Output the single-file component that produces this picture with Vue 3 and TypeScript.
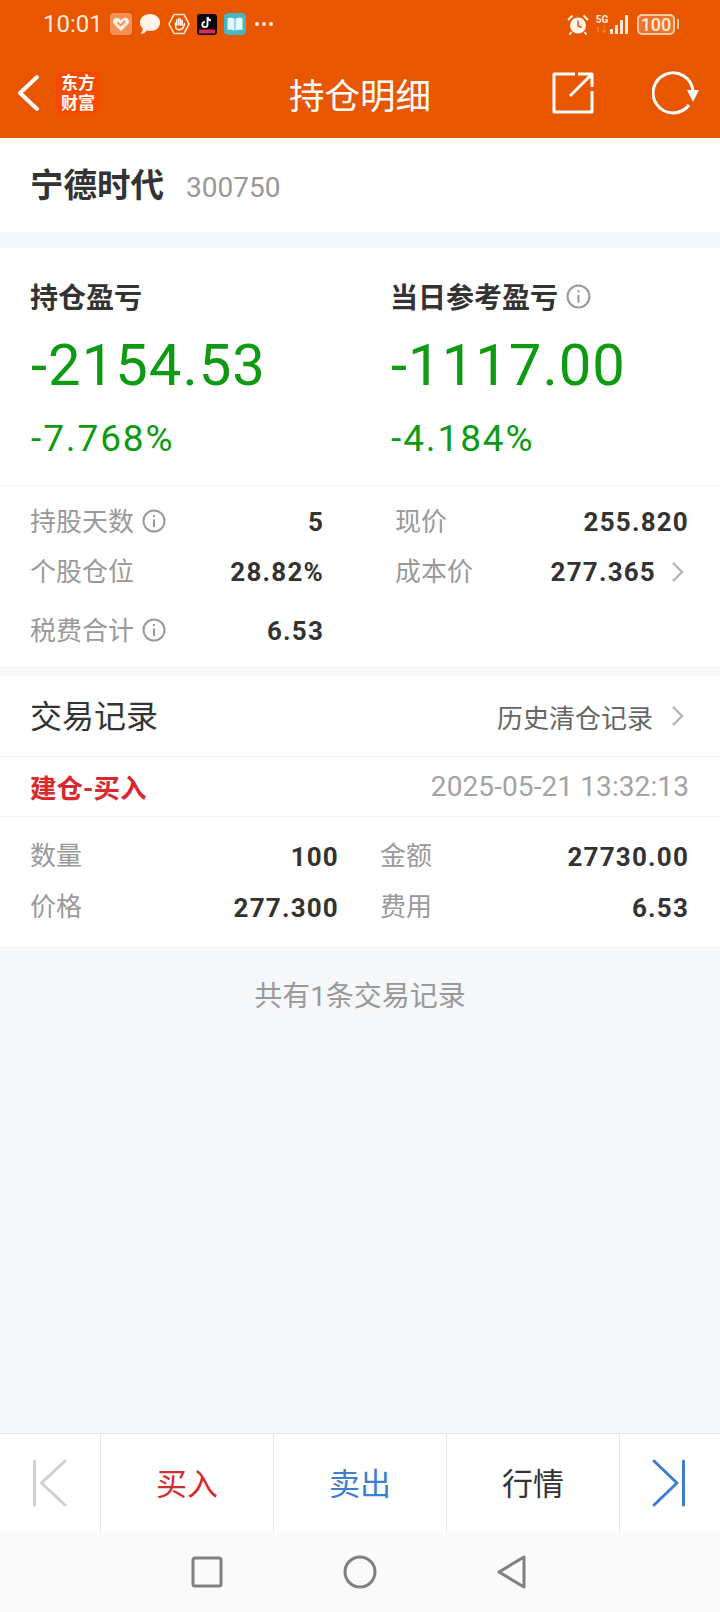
<template>
  <div class="page">
    <header class="top">
      <div class="status-bar">
        <span class="time">10:01</span>
        <div class="notify-icons">
          <svg class="ic-health" width="22" height="22" viewBox="0 0 22 22">
            <rect width="22" height="22" rx="4" fill="#f68f55" />
            <path d="M11 18 L3.5 10.5 C1.8 7 5 3.6 8 5 C9.5 5.7 10.4 6.5 11 7.4 C11.6 6.5 12.5 5.7 14 5 C17 3.6 20.2 7 18.5 10.5 Z" fill="#fff1e4" />
            <path d="M7.5 9.5 L10.5 12.5 L15 8" fill="none" stroke="#f68f55" stroke-width="1.8" />
          </svg>
          <svg class="ic-chat" width="22" height="22" viewBox="0 0 22 22">
            <path d="M11 1 C17 1 21 4.600 21 9.500 C21 14.500 17 18 11 18 C9.800 18 8.700 17.800 7.800 17.500 C6.500 19.500 4.500 20.700 1.500 21 C3 19.300 3.700 17.500 3.800 15.500 C2 14 1 12 1 9.500 C1 4.600 5 1 11 1 Z" fill="#fff3ea" />
          </svg>
          <svg class="ic-hand" width="22" height="22" viewBox="0 0 22 22">
            <path d="M6 1.500 H16 L21 11 L16 20.500 H6 L1 11 Z" fill="none" stroke="#ffe6d5" stroke-width="1.600" />
            <path d="M7.500 10 V12.500 C7.500 15 9 16.800 11.300 16.800 C13.500 16.800 15 15.500 15.700 13.500 L16.500 10.800 M8.800 12 V6.800 M10.700 12 V5.500 M12.500 12 V6 M14.200 12.500 V7.500" fill="none" stroke="#fff3ea" stroke-width="1.500" stroke-linecap="round" />
          </svg>
          <svg class="ic-tiktok" width="20" height="21" viewBox="0 0 20 21">
            <rect width="20" height="21" rx="3" fill="#0a0712" />
            <rect x="2" y="15.500" width="16" height="4" fill="#d92a55" />
            <path d="M10.500 3 V10.500 A2.600 2.600 0 1 1 7.900 7.900 M10.500 3 C10.800 5 12 6.200 14 6.400" fill="none" stroke="#fff" stroke-width="1.800" />
          </svg>
          <svg class="ic-book" width="22" height="22" viewBox="0 0 22 22">
            <rect width="22" height="22" rx="4" fill="#43b7c8" />
            <path d="M11 6 C9 4.600 6.500 4.500 3.500 5 V17 C6.500 16.500 9 16.600 11 18 C13 16.600 15.500 16.500 18.500 17 V5 C15.500 4.500 13 4.600 11 6 Z" fill="#e6f8fb" />
            <path d="M11 6 V18" stroke="#43b7c8" stroke-width="1" />
          </svg>
          <span class="dots"><i></i><i></i><i></i></span>
        </div>
        <div class="system-icons">
          <svg width="22" height="21" viewBox="0 0 22 21">
            <circle cx="11" cy="11.500" r="8" fill="#fff3ea" />
            <path d="M11 6.500 V12 L14.500 13.500" fill="none" stroke="#e85600" stroke-width="1.500" />
            <path d="M1 6 L5.500 1.500 M21 6 L16.500 1.500 M4.500 18 L2.500 20.500 M17.500 18 L19.500 20.500" stroke="#fff3ea" stroke-width="2" />
          </svg>
          <div class="net">
            <span class="net-g">5G</span>
            <span class="net-arrows">1↓</span>
          </div>
          <div class="signal">
            <i v-for="h in signalBars" :key="h" :style="{ height: h + 'px' }"></i>
          </div>
          <div class="battery">
            <span class="battery-body">100</span>
            <i class="battery-tip"></i>
          </div>
        </div>
      </div>
      <div class="nav-bar">
        <div class="nav-left">
          <svg width="24" height="38" viewBox="0 0 24 38">
            <path d="M21 3 L4 19 L21 35" fill="none" stroke="#fff" stroke-width="4" stroke-linecap="round" stroke-linejoin="round" />
          </svg>
          <div class="logo">东方<br />财富</div>
        </div>
        <h1 class="nav-title">持仓明细</h1>
        <div class="nav-right">
          <svg width="44" height="44" viewBox="0 0 44 44">
            <path d="M24 3 H3 V41 H41 V20" fill="none" stroke="#fff" stroke-width="3" stroke-linejoin="round" />
            <path d="M19 25 L41 3 M27 3 H41 V16" fill="none" stroke="#fff" stroke-width="3" stroke-linejoin="round" />
          </svg>
          <svg width="48" height="46" viewBox="0 0 48 46">
            <path d="M41 21 A20 20 0 1 0 37 35" fill="none" stroke="#fff" stroke-width="3" />
            <path d="M35 20 H47 L41 32 Z" fill="#fff" />
          </svg>
        </div>
      </div>
    </header>

    <main class="main">
      <section class="stock">
        <span class="stock-name">宁德时代</span>
        <span class="stock-code">300750</span>
      </section>

      <section class="profit">
        <div class="profit-cols">
          <div v-for="p in profits" :key="p.label" class="profit-col">
            <div class="profit-label">
              {{ p.label }}
              <svg v-if="p.info" class="info info-lg" viewBox="0 0 24 24">
                <circle cx="12" cy="12" r="10.500" />
                <path d="M12 10.500 V18 M12 6 V8" />
              </svg>
            </div>
            <div class="profit-value">{{ p.value }}</div>
            <div class="profit-rate">{{ p.rate }}</div>
          </div>
        </div>
        <div class="details">
          <div v-for="d in details" :key="d.label" class="detail" :class="{ 'detail-tall': d.tall }">
            <span class="k">
              {{ d.label }}
              <svg v-if="d.info" class="info info-sm" viewBox="0 0 24 24">
                <circle cx="12" cy="12" r="10.500" />
                <path d="M12 10.500 V18 M12 6 V8" />
              </svg>
            </span>
            <span class="v">
              {{ d.value }}
              <svg v-if="d.more" class="chev" viewBox="0 0 14 24">
                <path d="M2 2 L12 12 L2 22" />
              </svg>
            </span>
          </div>
        </div>
      </section>

      <section class="records">
        <div class="records-head">
          <span class="records-title">交易记录</span>
          <span class="records-link">
            历史清仓记录
            <svg class="chev" viewBox="0 0 14 24">
              <path d="M2 2 L12 12 L2 22" />
            </svg>
          </span>
        </div>
        <div class="trade-head">
          <span class="trade-type">建仓-买入</span>
          <span class="trade-time">2025-05-21 13:32:13</span>
        </div>
        <div class="trade-body">
          <div v-for="t in trade" :key="t.label" class="trade-item">
            <span class="k">{{ t.label }}</span>
            <span class="v">{{ t.value }}</span>
          </div>
        </div>
      </section>

      <p class="records-count">共有1条交易记录</p>
    </main>

    <footer class="toolbar">
      <div class="tool tool-arrow">
        <svg width="40" height="50" viewBox="0 0 40 50">
          <path d="M3.500 3 V47 M34 3 L10.500 25 L34 47" fill="none" stroke="#cfcfcf" stroke-width="3" stroke-linecap="round" stroke-linejoin="round" />
        </svg>
      </div>
      <div class="tool tool-buy">买入</div>
      <div class="tool tool-sell">卖出</div>
      <div class="tool tool-quote">行情</div>
      <div class="tool tool-arrow tool-next">
        <svg width="40" height="50" viewBox="0 0 40 50">
          <path d="M36.500 3 V47 M7 3 L30 25 L7 47" fill="none" stroke="#3d7fcc" stroke-width="3" stroke-linecap="round" stroke-linejoin="round" />
        </svg>
      </div>
    </footer>

    <nav class="sys-nav">
      <svg width="32" height="32" viewBox="0 0 32 32">
        <rect x="2" y="2" width="28" height="28" rx="2" fill="none" stroke="#808080" stroke-width="3" />
      </svg>
      <svg width="34" height="34" viewBox="0 0 34 34">
        <circle cx="17" cy="17" r="15" fill="none" stroke="#808080" stroke-width="3" />
      </svg>
      <svg width="30" height="34" viewBox="0 0 30 34">
        <path d="M27 2 L2 17 L27 32 Z" fill="none" stroke="#808080" stroke-width="3" stroke-linejoin="round" />
      </svg>
    </nav>
  </div>
</template>

<script setup lang="ts">
interface Profit {
  label: string
  value: string
  rate: string
  info?: boolean
}

interface Detail {
  label: string
  value: string
  info?: boolean
  more?: boolean
  tall?: boolean
}

const signalBars = [5, 9, 14, 19]

const profits: Profit[] = [
  { label: '持仓盈亏', value: '-2154.53', rate: '-7.768%' },
  { label: '当日参考盈亏', value: '-1117.00', rate: '-4.184%', info: true }
]

const details: Detail[] = [
  { label: '持股天数', value: '5', info: true },
  { label: '现价', value: '255.820' },
  { label: '个股仓位', value: '28.82%' },
  { label: '成本价', value: '277.365', more: true },
  { label: '税费合计', value: '6.53', info: true, tall: true }
]

const trade = [
  { label: '数量', value: '100' },
  { label: '金额', value: '27730.00' },
  { label: '价格', value: '277.300' },
  { label: '费用', value: '6.53' }
]
</script>

<style>
html,
body {
  margin: 0;
  background: #f6f7f9;
}
</style>

<style scoped>
.page {
  display: flex;
  flex-direction: column;
  width: 720px;
  height: 1612px;
  overflow: hidden;
  background: #f6f7f9;
  font-family: Roboto, "Noto Sans CJK SC", sans-serif;
  color: #333;
}

/* 顶部 */
.top {
  height: 138px;
  background: #e85600;
  color: #fff;
}

.status-bar {
  display: flex;
  align-items: center;
  height: 48px;
  padding: 0 41px 0 43px;
}

.time {
  width: 67px;
  font-size: 24px;
  color: #ffeadc;
}

.notify-icons {
  display: flex;
  align-items: center;
  gap: 7px;
  flex: 1;
}

.dots {
  display: flex;
  gap: 3px;
  margin-left: 2px;
}

.dots i {
  width: 4px;
  height: 4px;
  border-radius: 50%;
  background: #ffeadc;
}

.system-icons {
  display: flex;
  align-items: center;
}

.net {
  display: flex;
  flex-direction: column;
  align-items: center;
  width: 14px;
  margin-left: 6px;
  line-height: 1;
}

.net-g {
  font-size: 10px;
  font-weight: 700;
  color: #ffeadc;
}

.net-arrows {
  margin-top: 1px;
  font-size: 8px;
  color: #f9a06c;
}

.signal {
  display: flex;
  align-items: flex-end;
  gap: 2px;
  height: 20px;
  margin-left: 1px;
}

.signal i {
  width: 3px;
  background: #ffeadc;
}

.battery {
  display: flex;
  align-items: center;
  margin-left: 9px;
}

.battery-body {
  width: 38px;
  height: 21px;
  box-sizing: border-box;
  border: 2px solid #ffc9a8;
  border-radius: 5px;
  background: rgba(255, 255, 255, 0.18);
  font-size: 18px;
  font-weight: 500;
  line-height: 17px;
  text-align: center;
  color: #ffeadc;
}

.battery-tip {
  width: 2px;
  height: 10px;
  margin-left: 2px;
  background: #ffc9a8;
}

.nav-bar {
  position: relative;
  display: flex;
  align-items: center;
  justify-content: space-between;
  height: 90px;
  padding: 0 20px 0 16px;
}

.nav-left {
  display: flex;
  align-items: center;
  gap: 16px;
}

.logo {
  width: 44px;
  height: 44px;
  border-radius: 8px;
  background: #f64a00;
  font-size: 17px;
  font-weight: 700;
  line-height: 20px;
  text-align: center;
  padding-top: 2px;
  box-sizing: border-box;
}

.nav-title {
  position: absolute;
  left: 0;
  right: 0;
  margin: 0;
  font-size: 35.500px;
  font-weight: 400;
  text-align: center;
}

.nav-right {
  display: flex;
  align-items: center;
  gap: 57px;
}

/* 内容 */
.main {
  flex: 1;
}

.stock {
  display: flex;
  align-items: baseline;
  gap: 22px;
  height: 94px;
  box-sizing: border-box;
  padding: 20px 30px 0;
  background: #fff;
}

.stock-name {
  font-size: 33.500px;
  font-weight: 700;
}

.stock-code {
  font-size: 28px;
  color: #999;
}

.profit {
  margin-top: 16px;
  height: 418px;
  background: #fff;
}

.profit-cols {
  display: flex;
  height: 238px;
  box-sizing: border-box;
  padding: 25px 30px 0;
  border-bottom: 1px solid #f2f2f2;
}

.profit-col {
  flex: 0 0 360px;
}

.profit-label {
  display: flex;
  align-items: center;
  gap: 8px;
  height: 46px;
  font-size: 28px;
  font-weight: 700;
}

.profit-value {
  margin-top: 11px;
  margin-left: 1px;
  font-size: 58px;
  letter-spacing: 1px;
  line-height: 70px;
  color: #0f9a14;
}

.profit-rate {
  margin-top: 16px;
  margin-left: 1px;
  font-size: 37px;
  letter-spacing: 1.900px;
  line-height: 46px;
  color: #0f9a14;
}

.details {
  display: grid;
  grid-template-columns: 294px 294px;
  column-gap: 71px;
  padding: 11px 31px 0 30px;
}

.detail {
  display: flex;
  align-items: center;
  justify-content: space-between;
  height: 50px;
}

.detail-tall {
  height: 50px;
  margin-top: 9px;
}

.k {
  display: flex;
  align-items: center;
  gap: 8px;
  margin-bottom: 6px;
  font-size: 26px;
  color: #999;
}

.v {
  display: flex;
  align-items: center;
  gap: 15px;
  font-size: 26px;
  font-weight: 700;
  letter-spacing: 1.200px;
  color: #333;
}

.info {
  width: 24px;
  height: 24px;
  fill: none;
  stroke: #999;
  stroke-width: 2;
}

.info-sm {
  margin-top: 4px;
}

.info-lg {
  width: 25px;
  height: 25px;
}

.chev {
  width: 13px;
  height: 22px;
  fill: none;
  stroke: #b5b5b5;
  stroke-width: 2.500;
  margin-right: 5px;
}

.records {
  margin-top: 10px;
  background: #fff;
}

.records-head {
  display: flex;
  align-items: center;
  justify-content: space-between;
  height: 81px;
  box-sizing: border-box;
  padding: 0 31px 0 30px;
  border-bottom: 1px solid #f2f2f2;
}

.records-title {
  margin-bottom: 4px;
  font-size: 32px;
}

.records-link {
  display: flex;
  align-items: center;
  gap: 18px;
  font-size: 26px;
  color: #666;
}

.trade-head {
  display: flex;
  align-items: center;
  justify-content: space-between;
  height: 60px;
  box-sizing: border-box;
  padding: 0 31px 0 30px;
  border-bottom: 1px solid #f2f2f2;
}

.trade-type {
  font-size: 26.500px;
  font-weight: 700;
  color: #d9282e;
}

.trade-time {
  font-size: 28px;
  letter-spacing: 0.100px;
  color: #a3a3a3;
}

.trade-body {
  display: grid;
  grid-template-columns: 309px 309px;
  column-gap: 41px;
  align-content: start;
  height: 129px;
  box-sizing: border-box;
  padding: 14px 31px 0 30px;
}

.trade-item {
  display: flex;
  align-items: center;
  justify-content: space-between;
  height: 51px;
}

.records-count {
  margin: 0;
  padding-top: 32px;
  font-size: 28px;
  line-height: 38px;
  text-align: center;
  color: #999;
}

/* 底部操作栏 */
.toolbar {
  display: grid;
  grid-template-columns: 101px 173px 173px 173px 100px;
  height: 99px;
  box-sizing: border-box;
  border-top: 1px solid #e6e6e6;
  background: #fff;
}

.tool {
  display: flex;
  align-items: center;
  justify-content: center;
  box-sizing: border-box;
  padding-bottom: 4px;
  border-right: 1px solid #e8e8e8;
  font-size: 31px;
}

.tool-arrow {
  padding-bottom: 0;
}

.tool-arrow svg {
  margin-left: 2px;
}

.tool-next {
  border-right: none;
}

.tool-next svg {
  margin-left: 0;
  margin-right: 6px;
}

.tool-buy {
  color: #d32f2f;
}

.tool-sell {
  color: #3d7fcc;
}

.tool-quote {
  color: #333;
}

.sys-nav {
  display: flex;
  align-items: center;
  justify-content: center;
  gap: 120px;
  height: 80px;
  box-sizing: border-box;
  padding-right: 3px;
  background: #fafafa;
}
</style>
